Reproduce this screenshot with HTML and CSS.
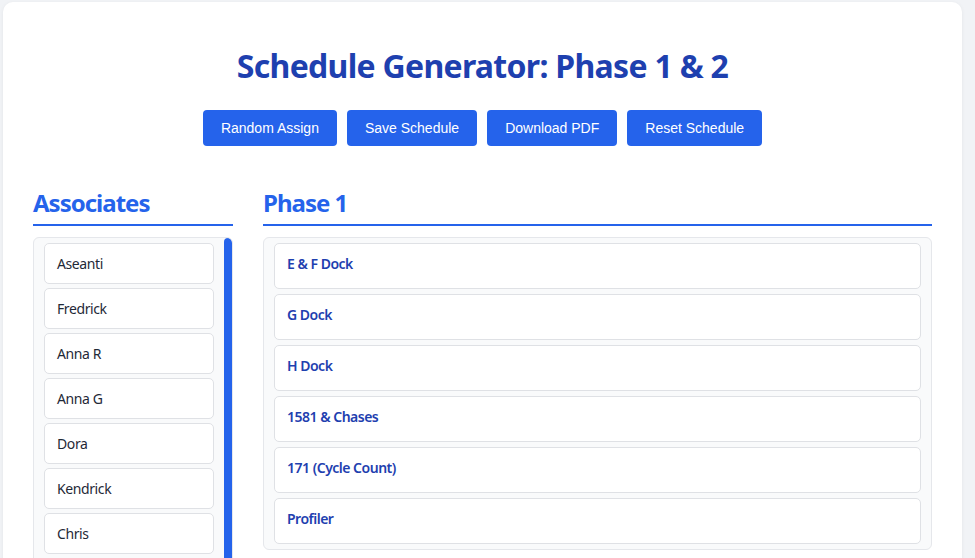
FILE: index.html
```html
<!DOCTYPE html>
<html lang="en">
<head>
<meta charset="utf-8">
<title>Schedule Generator</title>
<link rel="stylesheet" href="styles.css">
</head>
<body>
<div class="card">
  <h1 class="title">Schedule Generator: Phase 1 &amp; 2</h1>
  <div class="actions">
    <button class="btn">Random Assign</button>
    <button class="btn">Save Schedule</button>
    <button class="btn">Download PDF</button>
    <button class="btn">Reset Schedule</button>
  </div>
  <div class="columns">
    <section class="assoc-col">
      <h2 class="section-title">Associates</h2>
      <div class="assoc-list">
        <div class="assoc-items">
          <div class="assoc">Aseanti</div>
          <div class="assoc">Fredrick</div>
          <div class="assoc">Anna R</div>
          <div class="assoc">Anna G</div>
          <div class="assoc">Dora</div>
          <div class="assoc">Kendrick</div>
          <div class="assoc">Chris</div>
        </div>
        <div class="scroll-rail"><div class="scroll-thumb"></div></div>
      </div>
    </section>
    <section class="phase-col">
      <h2 class="section-title">Phase 1</h2>
      <div class="phase-list">
        <div class="station">E &amp; F Dock</div>
        <div class="station">G Dock</div>
        <div class="station">H Dock</div>
        <div class="station">1581 &amp; Chases</div>
        <div class="station">171 (Cycle Count)</div>
        <div class="station">Profiler</div>
      </div>
    </section>
  </div>
</div>
</body>
</html>
```

FILE: styles.css
```css
html {
  overflow: hidden;
}
body {
  margin: 0;
  padding: 2px 13px 40px 3px;
  background: #f1f3f6;
  font-family: "Noto Sans", "Open Sans", sans-serif;
}
.card {
  background: #ffffff;
  border-radius: 10px;
  box-shadow: 0 1px 4px rgba(0, 0, 0, 0.06);
  padding: 30px;
}
.title {
  margin: 15px 0 25px;
  text-align: center;
  font-size: 32px;
  line-height: 1.2;
  font-weight: 700;
  letter-spacing: -0.7px;
  color: #1e40af;
}
.actions {
  display: flex;
  justify-content: center;
  gap: 10px;
  margin-bottom: 43px;
}
.btn {
  font-family: "Liberation Sans", Arial, sans-serif;
  font-size: 14px;
  line-height: 16px;
  color: #ffffff;
  background: #2563eb;
  border: none;
  border-radius: 4px;
  padding: 10px 18px;
}
.columns {
  display: flex;
  gap: 30px;
  align-items: flex-start;
}
.assoc-col {
  width: 200px;
  flex: none;
}
.phase-col {
  flex: 1;
}
.section-title {
  margin: 0 0 11px;
  font-size: 24px;
  line-height: 1.2;
  font-weight: 700;
  letter-spacing: -1px;
  color: #2563eb;
  padding-bottom: 6px;
  border-bottom: 2px solid #2563eb;
}
.assoc-list,
.phase-list {
  background: #f9fafb;
  border: 1px solid #e5e7eb;
  border-radius: 6px;
}
.phase-list {
  padding: 5px 10px;
}
.assoc-list {
  display: flex;
  height: 380px;
  overflow: hidden;
  padding-left: 10px;
}
.assoc-items {
  flex: 1;
  padding: 5px 10px 5px 0;
}
.scroll-rail {
  width: 8px;
  flex: none;
}
.scroll-thumb {
  height: 460px;
  background: #2563eb;
  border-radius: 4px;
}
.assoc {
  background: #ffffff;
  border: 1px solid #dfe1e5;
  border-radius: 5px;
  padding: 10px 12px;
  font-size: 14px;
  line-height: 19px;
  letter-spacing: -0.4px;
  color: #1f2937;
  margin-bottom: 4px;
}
.station {
  background: #ffffff;
  border: 1px solid #dfe1e5;
  border-radius: 5px;
  padding: 10px 12px;
  height: 46px;
  box-sizing: border-box;
  font-size: 14px;
  line-height: 20px;
  font-weight: 600;
  letter-spacing: -0.5px;
  color: #1e40af;
  margin-bottom: 5px;
}
.station:last-child {
  margin-bottom: 0;
}
```
